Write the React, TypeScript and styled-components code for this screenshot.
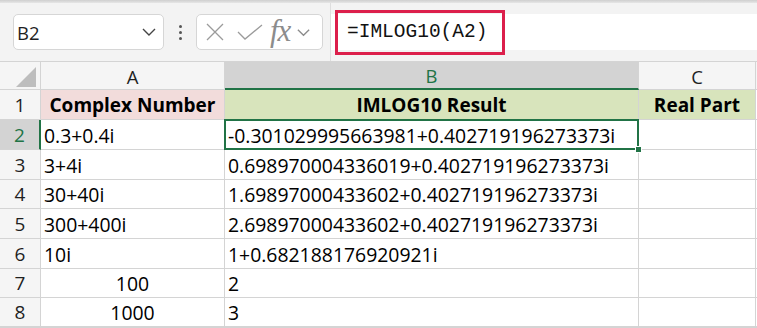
import React from "react";
import styled, { createGlobalStyle, css } from "styled-components";

const GlobalStyle = createGlobalStyle`
  html, body {
    margin: 0;
    padding: 0;
    background: #f3f3f3;
    overflow: hidden;
  }
  * { box-sizing: border-box; }
`;

const green = "#217346";
const gridLine = "#d4d4d4";

const Page = styled.div`
  width: 757px;
  height: 328px;
  display: flex;
  flex-direction: column;
  background: #f3f3f3;
  font-family: "Open Sans", "Noto Sans", sans-serif;
`;

const TopShade = styled.div`
  height: 3px;
  background: linear-gradient(#cfcfcf, #e6e6e6);
`;

const FormulaBar = styled.div`
  height: 58px;
  display: flex;
  align-items: center;
  padding-left: 13px;
`;

const NameBox = styled.div`
  width: 151px;
  height: 36px;
  background: #fff;
  border: 1px solid #d6d6d6;
  border-radius: 5px;
  display: flex;
  align-items: center;
  justify-content: space-between;
  padding: 0 6px 0 3px;
  font-size: 18.5px;
  color: #1f1f1f;
`;

const Dots = styled.div`
  width: 32px;
  display: flex;
  flex-direction: column;
  align-items: center;
  gap: 3px;
  span {
    width: 3px;
    height: 3px;
    border-radius: 50%;
    background: #555;
  }
`;

const FuncBox = styled.div`
  width: 127px;
  height: 36px;
  background: #fff;
  border: 1px solid #d6d6d6;
  border-radius: 5px;
  display: flex;
  align-items: center;
  padding-left: 8px;
`;

const Slot = styled.span<{ $gap: number }>`
  display: flex;
  align-items: center;
  margin-left: ${(p) => p.$gap}px;
`;

const Fx = styled.span`
  font-family: "Liberation Serif", serif;
  font-style: italic;
  font-size: 31px;
  color: #8c8c8c;
  line-height: 1;
  margin-top: -4px;
  letter-spacing: -1px;
`;

const FormulaField = styled.div`
  flex: 1;
  align-self: stretch;
  margin-left: 7px;
  border-left: 1px solid #dedede;
  display: flex;
  align-items: center;
`;

const FormulaInput = styled.div`
  flex: 1;
  height: 36px;
  background: #fff;
  display: flex;
  align-items: center;
  padding-left: 4px;
`;

const Highlight = styled.div`
  width: 170px;
  height: 45px;
  border: 3px solid #dc1f4b;
  display: flex;
  align-items: center;
  padding-left: 9px;
  font-family: "Liberation Mono", monospace;
  font-size: 19.5px;
  color: #111;
`;

const Sheet = styled.div`
  display: grid;
  grid-template-columns: 41px 184px 414px 117px 1fr;
  grid-template-rows: 28px 30px 30px 30px 29px 30px 30px 29px 29px 1fr;
  flex: 1;
  background: #fff;
  border-top: 1px solid ${gridLine};
`;

const Corner = styled.div`
  background: #f5f5f5;
  border-right: 1px solid ${gridLine};
  border-bottom: 1px solid ${gridLine};
  display: flex;
  align-items: flex-end;
  justify-content: flex-end;
  padding: 0 4px 2px 0;
`;

const ColHead = styled.div<{ $active?: boolean }>`
  background: ${(p) => (p.$active ? "#d3d3d3" : "#f5f5f5")};
  color: ${(p) => (p.$active ? green : "#1f1f1f")};
  border-right: 1px solid ${gridLine};
  border-bottom: ${(p) => (p.$active ? `2px solid ${green}` : `1px solid ${gridLine}`)};
  display: flex;
  align-items: center;
  justify-content: center;
  font-size: 18.5px;
  padding-top: 1px;
`;

const Filler = styled.div<{ $head?: boolean }>`
  background: ${(p) => (p.$head ? "#f5f5f5" : "#fff")};
  border-bottom: 1px solid ${gridLine};
`;

const RowHead = styled.div<{ $active?: boolean }>`
  background: ${(p) => (p.$active ? "#d3d3d3" : "#f5f5f5")};
  color: ${(p) => (p.$active ? green : "#1f1f1f")};
  border-right: ${(p) => (p.$active ? `2px solid ${green}` : `1px solid ${gridLine}`)};
  border-bottom: 1px solid ${gridLine};
  display: flex;
  align-items: center;
  justify-content: center;
  font-size: 19px;
`;

const Cell = styled.div<{
  $fill?: string;
  $bold?: boolean;
  $center?: boolean;
  $selected?: boolean;
}>`
  position: relative;
  background: ${(p) => p.$fill || "#fff"};
  border-right: 1px solid ${gridLine};
  border-bottom: 1px solid ${gridLine};
  display: flex;
  align-items: flex-end;
  justify-content: ${(p) => (p.$center ? "center" : "flex-start")};
  padding: 0 3px 0px 3px;
  font-family: "Open Sans", sans-serif;
  font-size: ${(p) => (p.$bold ? 19 : 19.4)}px;
  line-height: 27px;
  font-weight: ${(p) => (p.$bold ? 700 : 400)};
  color: #000;
  white-space: nowrap;
  ${(p) =>
    p.$selected &&
    css`
      &::after {
        content: "";
        position: absolute;
        left: -1px;
        top: -1px;
        right: -1px;
        bottom: -1px;
        border: 2px solid ${green};
        pointer-events: none;
      }
    `}
`;

const FillHandle = styled.span`
  position: absolute;
  right: -4px;
  bottom: -4px;
  width: 7px;
  height: 7px;
  background: ${green};
  border: 1px solid #fff;
  z-index: 2;
`;

const Chevron = ({ color, size = 16 }: { color: string; size?: number }) => (
  <svg width={size} height={size} viewBox="0 0 16 16">
    <polyline points="2,5 8,11 14,5" fill="none" stroke={color} strokeWidth="1.4" />
  </svg>
);

const CrossIcon = () => (
  <svg width="20" height="20" viewBox="0 0 20 20">
    <path d="M2 2 L18 18 M18 2 L2 18" stroke="#9b9b9b" strokeWidth="1.3" fill="none" />
  </svg>
);

const CheckIcon = () => (
  <svg width="26" height="20" viewBox="0 0 26 20">
    <polyline points="1,10 8,17 25,3" stroke="#9b9b9b" strokeWidth="1.3" fill="none" />
  </svg>
);

const CornerTriangle = () => (
  <svg width="20" height="20" viewBox="0 0 20 20">
    <polygon points="20,0 20,20 0,20" fill="#bdbdbd" />
  </svg>
);

const rows: { n: number; a: string; b: string; center?: boolean }[] = [
  { n: 2, a: "0.3+0.4i", b: "-0.301029995663981+0.402719196273373i" },
  { n: 3, a: "3+4i", b: "0.698970004336019+0.402719196273373i" },
  { n: 4, a: "30+40i", b: "1.69897000433602+0.402719196273373i" },
  { n: 5, a: "300+400i", b: "2.69897000433602+0.402719196273373i" },
  { n: 6, a: "10i", b: "1+0.682188176920921i" },
  { n: 7, a: "100", b: "2", center: true },
  { n: 8, a: "1000", b: "3", center: true },
];

export default function App() {
  return (
    <Page>
      <GlobalStyle />
      <TopShade />
      <FormulaBar>
        <NameBox>
          <span>B2</span>
          <Chevron color="#444" />
        </NameBox>
        <Dots>
          <span />
          <span />
          <span />
        </Dots>
        <FuncBox>
          <Slot $gap={0}>
            <CrossIcon />
          </Slot>
          <Slot $gap={12}>
            <CheckIcon />
          </Slot>
          <Slot $gap={7}>
            <Fx>fx</Fx>
          </Slot>
          <Slot $gap={6}>
            <Chevron color="#8c8c8c" size={15} />
          </Slot>
        </FuncBox>
        <FormulaField>
          <FormulaInput>
            <Highlight>=IMLOG10(A2)</Highlight>
          </FormulaInput>
        </FormulaField>
      </FormulaBar>

      <Sheet>
        <Corner>
          <CornerTriangle />
        </Corner>
        <ColHead>A</ColHead>
        <ColHead $active>B</ColHead>
        <ColHead>C</ColHead>
        <Filler $head />

        <RowHead>1</RowHead>
        <Cell $fill="#f2dcdb" $bold $center>Complex Number</Cell>
        <Cell $fill="#d8e4bc" $bold $center>IMLOG10 Result</Cell>
        <Cell $fill="#d8e4bc" $bold $center>Real Part</Cell>
        <Filler />

        {rows.map((r) => (
          <React.Fragment key={r.n}>
            <RowHead $active={r.n === 2}>{r.n}</RowHead>
            <Cell $center={r.center}>{r.a}</Cell>
            <Cell $selected={r.n === 2}>
              {r.b}
              {r.n === 2 && <FillHandle />}
            </Cell>
            <Cell />
            <Filler />
          </React.Fragment>
        ))}

        <RowHead />
        <Cell />
        <Cell />
        <Cell />
        <Filler />
      </Sheet>
    </Page>
  );
}
